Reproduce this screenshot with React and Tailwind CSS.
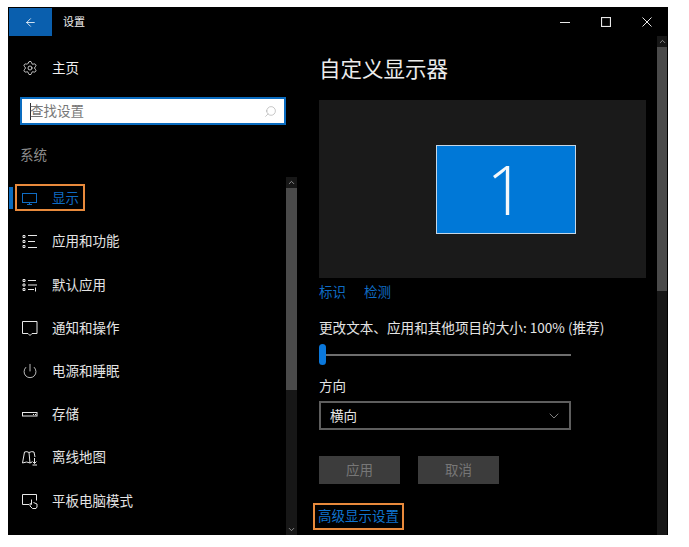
import { ArrowLeft, Search, ChevronUp, ChevronDown, Settings, Power } from "lucide-react";

const font = { fontFamily: '"Noto Sans CJK SC", "Liberation Sans", sans-serif' };

function Icon({ children }) {
  return (
    <svg width="16" height="16" viewBox="0 0 16 16" fill="none" stroke="currentColor" strokeWidth="1">
      {children}
    </svg>
  );
}

const items = [
  {
    label: "应用和功能",
    icon: (
      <Icon>
        <path d="M1 1.500h2v2H1zM1 6.500h2v2H1zM1 11.500h2v2H1z" />
        <path d="M6 1.500h9M6 7.500h7M6 13.500h9" />
      </Icon>
    ),
  },
  {
    label: "默认应用",
    icon: (
      <Icon>
        <path d="M1 2.500h2v2H1zM1 7h2v2H1zM1 11.500h2v2H1z" />
        <path d="M6 3.500h8M6 8h9M6 12.500h6M13.500 10.500v4" />
      </Icon>
    ),
  },
  {
    label: "通知和操作",
    icon: (
      <Icon>
        <path d="M6 13.500H0.500V1.500h14.500v12H10L8 15.500z" />
      </Icon>
    ),
  },
  { label: "电源和睡眠", icon: <Power size={16} strokeWidth={1.2} /> },
  {
    label: "存储",
    icon: (
      <Icon>
        <rect x="0.500" y="6.500" width="14.500" height="3.500" />
        <path d="M11 8.500h1M13 8.500h1" />
      </Icon>
    ),
  },
  {
    label: "离线地图",
    icon: (
      <Icon>
        <path d="M0.500 13L2.500 2Q5 1 7 2.500L8 13Q5 11 0.500 13z" />
        <path d="M7 2.500Q10 1 12 2L13 7M8 13L10 12" />
        <path d="M12.500 8v5.500M10.500 11.500l2 2 2-2M10.500 15h4.500" />
      </Icon>
    ),
  },
  {
    label: "平板电脑模式",
    icon: (
      <Icon>
        <path d="M7 11.500H0.500v-10h14v6" />
        <path d="M9.500 6.500v5l-1.500-1v2.500l2.500 2.500h3.500l1-1.500v-3l-3.500-1.500" />
      </Icon>
    ),
  },
];

function Scrollbar({ thumb, showDown, width }) {
  return (
    <div className={`${width} flex flex-col bg-[#171717] text-[#b0b0b0] shrink-0`}>
      <div className="h-[11px] flex items-center justify-center">
        <ChevronUp size={9} strokeWidth={2} />
      </div>
      <div className={thumb}></div>
      <div className="flex-1"></div>
      {showDown && (
        <div className="h-[11px] flex items-center justify-center">
          <ChevronDown size={9} strokeWidth={2} />
        </div>
      )}
    </div>
  );
}

export default function App() {
  return (
    <div className="w-[689px] h-[547px] bg-white pl-2 pt-[7px] overflow-hidden" style={font}>
      <div className="w-[660px] h-[528px] bg-black flex flex-col text-[#f0f0f0]">
        <div className="h-[29px] flex items-center shrink-0">
          <div className="w-[43px] h-[28px] ml-px mt-px bg-[#0a5fae] flex items-center justify-center text-white pr-px">
            <ArrowLeft size={13} strokeWidth={1.5} />
          </div>
          <span className="ml-[11px] text-[11px]">设置</span>
          <div className="ml-auto flex items-center gap-[31px] pr-[16px] text-[#e8e8e8]">
            <svg width="10" height="10" viewBox="0 0 10 10" stroke="currentColor" strokeWidth="1" fill="none">
              <path d="M0 5.500h10" />
            </svg>
            <svg width="10" height="10" viewBox="0 0 10 10" stroke="currentColor" strokeWidth="1.200" fill="none">
              <rect x="0.500" y="0.500" width="9" height="9" />
            </svg>
            <svg width="10" height="10" viewBox="0 0 10 10" stroke="currentColor" strokeWidth="1" fill="none">
              <path d="M0.500 0.500l9 9M9.500 0.500l-9 9" />
            </svg>
          </div>
        </div>

        <div className="flex-1 flex min-h-0">
          <div className="w-[289px] flex flex-col shrink-0">
            <div className="flex items-center mt-[22px] h-[20px] pl-[14px]">
              <Settings size={16} strokeWidth={1.2} />
              <span className="ml-[14px] text-[13.5px] mb-[2px]">主页</span>
            </div>
            <div className="ml-[12px] w-[266px] h-[28px] mt-[19px] bg-white border-2 border-[#0a6cc0] flex items-center pl-[8px] pr-[7px] text-[13.5px] text-[#777]">
              <span className="w-px h-[17px] bg-[#333] mr-[-1px]"></span>
              <span className="mb-[2px]">查找设置</span>
              <Search size={13} strokeWidth={1} className="ml-auto text-[#999] -scale-x-100" />
            </div>
            <div className="ml-[12px] mt-[19px] text-[13.5px] leading-[20px] text-[#8c8c8c]">系统</div>

            <div className="flex-1 flex mt-[13px] min-h-0">
              <div className="flex-1 relative">
                <div className="absolute left-px top-[10px] w-[4px] h-[22px] bg-[#0a6cc0]"></div>
                <div className="absolute left-[7px] top-[7px] w-[70px] h-[27px] border-2 border-[#e88a3c]"></div>
                <div className="h-[43px] flex items-center pl-[14px] text-[#0f6cc4]">
                  <span className="w-[16px] flex justify-center">
                    <Icon>
                      <rect x="0.500" y="2.500" width="14" height="9" />
                      <path d="M5 13.500h5M7.500 11.500v2" />
                    </Icon>
                  </span>
                  <span className="ml-[14px] text-[13.5px] mb-[2px]">显示</span>
                </div>
                {items.map((item) => (
                  <div key={item.label} className="h-[43.2px] flex items-center pl-[14px]">
                    <span className="w-[16px] flex justify-center text-[#e8e8e8]">{item.icon}</span>
                    <span className="ml-[14px] text-[13.5px] text-[#e4e4e4] mb-[2px]">{item.label}</span>
                  </div>
                ))}
              </div>
              <Scrollbar width="w-[11px]" thumb="h-[202px] bg-[#4a4a4a]" showDown />
            </div>
          </div>

          <div className="flex-1 flex flex-col pl-[22px] min-w-0">
            <div className="text-[21.5px] leading-[30px] mt-[17px] text-[#ececec]">自定义显示器</div>
            <div className="w-[327px] h-[178px] mt-[17px] bg-[#1a1a1a] flex items-center justify-end pr-[70px]">
              <div className="w-[140px] h-[89px] bg-[#0078d7] border border-[#c4d6e6] flex items-center justify-center text-[68px] text-[#f4f8fb]" style={{ fontFamily: '"Open Sans", sans-serif', fontWeight: 300 }}>
                1
              </div>
            </div>
            <div className="flex gap-[18px] mt-[3px] text-[13.5px] leading-[20px] text-[#0f6cc4]">
              <span>标识</span>
              <span>检测</span>
            </div>
            <div className="mt-[16px] text-[13.6px] leading-[20px] text-[#e4e4e4] whitespace-nowrap">更改文本、应用和其他项目的大小: 100% (推荐)</div>
            <div className="relative h-[22px] w-[252px] mt-[7px] flex items-center">
              <div className="w-full h-[2px] bg-[#6e6e6e]"></div>
              <div className="absolute left-0 top-0 w-[7px] h-[21px] rounded-full bg-[#0a78dc]"></div>
            </div>
            <div className="mt-[9px] text-[13.5px] leading-[20px] text-[#e4e4e4]">方向</div>
            <div className="mt-[6px] w-[252px] h-[29px] border-2 border-[#5e5e5e] flex items-center pl-[9px] pr-[7px] text-[13.5px] text-[#e4e4e4]">
              <span>横向</span>
              <ChevronDown size={16} strokeWidth={1} className="ml-auto text-[#c0c0c0]" />
            </div>
            <div className="flex gap-[18px] mt-[26px]">
              <div className="w-[81px] h-[28px] bg-[#3c3c3c] flex items-center justify-center text-[13.5px] text-[#777] pb-[2px]">应用</div>
              <div className="w-[81px] h-[28px] bg-[#3c3c3c] flex items-center justify-center text-[13.5px] text-[#777] pb-[2px]">取消</div>
            </div>
            <div className="mt-[19px] -ml-[6px] w-[91px] h-[27px] border-2 border-[#e88a3c] flex items-center justify-center text-[13.5px] text-[#0f74cf] whitespace-nowrap pb-[2px]">高级显示设置</div>
          </div>

          <div className="w-[11px] shrink-0 pr-px">
            <Scrollbar width="w-[10px] h-full" thumb="flex-1 bg-[#4a4a4a]" />
          </div>
        </div>
      </div>
    </div>
  );
}
